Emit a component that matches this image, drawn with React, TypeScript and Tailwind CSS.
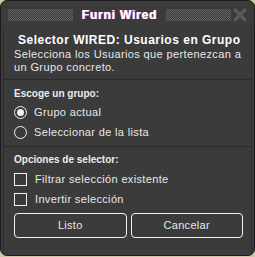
import React from "react";

const font = { fontFamily: '"Liberation Sans", Arial, sans-serif' };

function Radio({ checked, label }: { checked?: boolean; label: string }) {
  return (
    <div className="flex h-[20px] items-center">
      <div className="flex h-[13px] w-[13px] items-center justify-center rounded-full border border-[#f2f2f2]">
        {checked && <div className="h-[7px] w-[7px] rounded-full bg-[#f2f2f2]" />}
      </div>
      <span className="ml-[7px] text-[11px] tracking-[0.35px] text-[#e8e8e8]">{label}</span>
    </div>
  );
}

function Check({ label }: { label: string }) {
  return (
    <div className="flex h-[20px] items-center">
      <div className="h-[13px] w-[13px] border border-[#f2f2f2]" />
      <span className="ml-[8px] text-[11px] tracking-[0.35px] text-[#e8e8e8]">{label}</span>
    </div>
  );
}

export default function App() {
  return (
    <div className="h-[257px] w-[255px] bg-[#cfc7a6]" style={font}>
      <div className="flex h-[256px] w-[255px] flex-col overflow-hidden rounded-[7px] border border-[#1c1c1c] bg-[#3b3b3b]">
        {/* title bar */}
        <div className="flex h-[27px] shrink-0 items-center pl-[7px] pr-[6px]">
          <div className="h-[12px] flex-1 bg-[conic-gradient(#646464_25%,transparent_0_50%,#646464_0_75%,transparent_0)] bg-[length:2px_2px]" />
          <div className="px-[9px] text-[12px] font-bold tracking-[0.8px] text-white [text-shadow:-0.6px_0_#ff7aa8,0.6px_0_#86a8ff]">
            Furni Wired
          </div>
          <div className="h-[12px] flex-1 bg-[conic-gradient(#646464_25%,transparent_0_50%,#646464_0_75%,transparent_0)] bg-[length:2px_2px]" />
          <svg width="16" height="14" viewBox="0 0 16 14" className="ml-[1px]">
            <path d="M2 1 L14 13 M14 1 L2 13" stroke="#5e5e5e" strokeWidth="3.2" />
            <path d="M2 1 L14 13 M14 1 L2 13" stroke="#474747" strokeWidth="1" strokeDasharray="1 1" />
          </svg>
        </div>

        {/* content */}
        <div className="mx-[2px] flex flex-1 flex-col border-x border-[#2e2e2e]">
          <div className="mt-[5px] h-[14px] pl-[14px] text-[12px] font-bold leading-[14px] tracking-[0.5px] text-white">
            Selector WIRED: Usuarios en Grupo
          </div>
          <div className="mt-[1px] pl-[10px] pr-[6px] text-[11px] leading-[13px] tracking-[0.38px] text-[#e8e8e8]">
            Selecciona los Usuarios que pertenezcan a un Grupo concreto.
          </div>
          <div className="mt-[5px] h-[1px] bg-[#2a2a2a]" />
          <div className="px-[10px] pt-[8px]">
            <div className="h-[12px] text-[10px] font-bold leading-[12px] text-[#ececec]">Escoge un grupo:</div>
            <div className="mt-[2px]">
              <Radio checked label="Grupo actual" />
              <Radio label="Seleccionar de la lista" />
            </div>
          </div>
          <div className="mt-[4px] h-[1px] bg-[#2a2a2a]" />
          <div className="px-[10px] pt-[7px]">
            <div className="h-[12px] text-[10px] font-bold leading-[12px] text-[#ececec]">Opciones de selector:</div>
            <div className="mt-[3px]">
              <Check label="Filtrar selección existente" />
              <Check label="Invertir selección" />
            </div>
          </div>
          <div className="mt-[4px] flex gap-[4px] pl-[10px] pr-[8px]">
            <button className="h-[25px] flex-1 rounded-[4px] border border-[#f0f0f0] text-[11px] tracking-[0.3px] text-[#e8e8e8]">
              Listo
            </button>
            <button className="h-[25px] flex-1 rounded-[4px] border border-[#f0f0f0] text-[11px] tracking-[0.3px] text-[#e8e8e8]">
              Cancelar
            </button>
          </div>
        </div>
      </div>
    </div>
  );
}
